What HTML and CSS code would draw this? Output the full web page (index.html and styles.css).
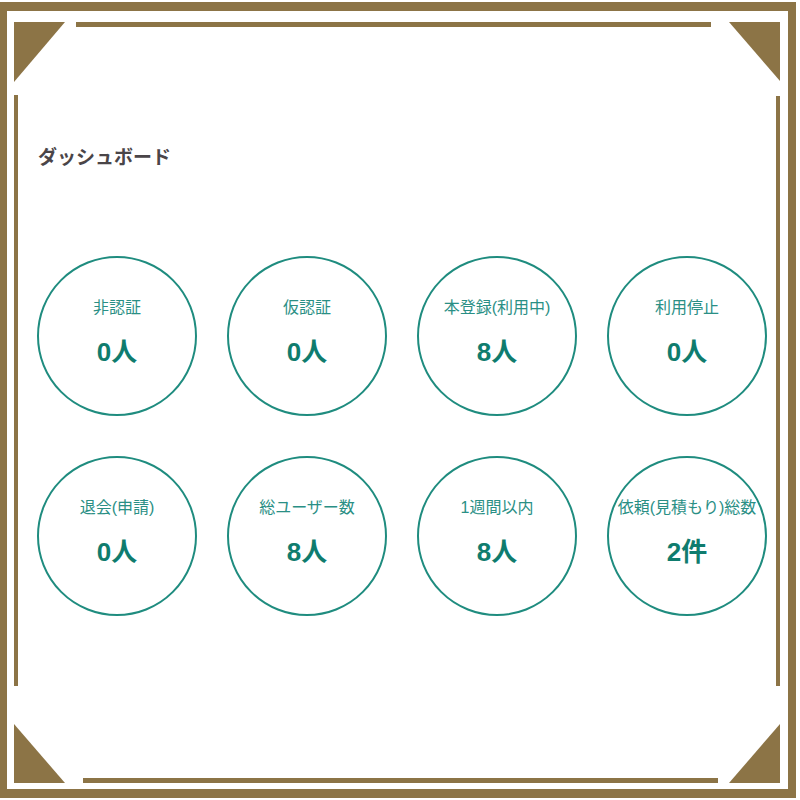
FILE: index.html
```html
<!DOCTYPE html>
<html lang="ja">
<head>
<meta charset="utf-8">
<title>ダッシュボード</title>
<link rel="stylesheet" href="styles.css">
</head>
<body>
<div class="page">
  <svg class="frame" width="800" height="800" viewBox="0 0 800 800" aria-hidden="true">
    <path fill="#8c7446" fill-rule="evenodd" d="M0 2H796V798H0Z M7 11V789H788V11Z"/>
    <polygon fill="#8c7446" points="14,22 65,22 14,82"/>
    <polygon fill="#8c7446" points="729,22 780,22 780,81"/>
    <polygon fill="#8c7446" points="14,724 14,783 65,783"/>
    <polygon fill="#8c7446" points="780,724 780,783 729,783"/>
    <rect fill="#8c7446" x="76" y="22" width="635" height="5"/>
    <rect fill="#8c7446" x="83" y="778" width="635" height="5"/>
    <rect fill="#8c7446" x="14" y="95" width="4" height="591"/>
    <rect fill="#8c7446" x="776" y="96" width="4" height="590"/>
  </svg>
  <main class="content">
    <h1 class="title">ダッシュボード</h1>
    <div class="stats">
      <div class="stat"><div class="label">非認証</div><div class="value">0人</div></div>
      <div class="stat"><div class="label">仮認証</div><div class="value">0人</div></div>
      <div class="stat"><div class="label">本登録(利用中)</div><div class="value">8人</div></div>
      <div class="stat"><div class="label">利用停止</div><div class="value">0人</div></div>
      <div class="stat"><div class="label">退会(申請)</div><div class="value">0人</div></div>
      <div class="stat"><div class="label">総ユーザー数</div><div class="value">8人</div></div>
      <div class="stat"><div class="label">1週間以内</div><div class="value">8人</div></div>
      <div class="stat"><div class="label">依頼(見積もり)総数</div><div class="value">2件</div></div>
    </div>
  </main>
</div>
</body>
</html>
```
FILE: styles.css
```css
html, body {
  margin: 0;
  padding: 0;
  background: #ffffff;
}

body {
  font-family: "Liberation Sans", "Noto Sans CJK JP", sans-serif;
}

.page {
  position: relative;
  width: 800px;
  height: 800px;
  overflow: hidden;
}

.frame {
  position: absolute;
  left: 0;
  top: 0;
  display: block;
}

.content {
  position: relative;
  padding: 144px 0 0 37px;
}

.title {
  margin: 0;
  font-size: 19px;
  line-height: 28px;
  font-weight: bold;
  color: #4a4548;
  padding-left: 1px;
}

.stats {
  margin-top: 84px;
  display: grid;
  grid-template-columns: repeat(4, 160px);
  column-gap: 30px;
  row-gap: 40px;
}

.stat {
  box-sizing: border-box;
  width: 160px;
  height: 160px;
  border: 2px solid #1f8c7f;
  border-radius: 50%;
  display: flex;
  flex-direction: column;
  align-items: center;
  padding-top: 40px;
}

.label {
  font-size: 16px;
  line-height: 20px;
  color: #2a8f85;
  white-space: nowrap;
}

.value {
  margin-top: 19px;
  font-size: 26px;
  line-height: 30px;
  font-weight: bold;
  color: #0f7c6e;
}
```
